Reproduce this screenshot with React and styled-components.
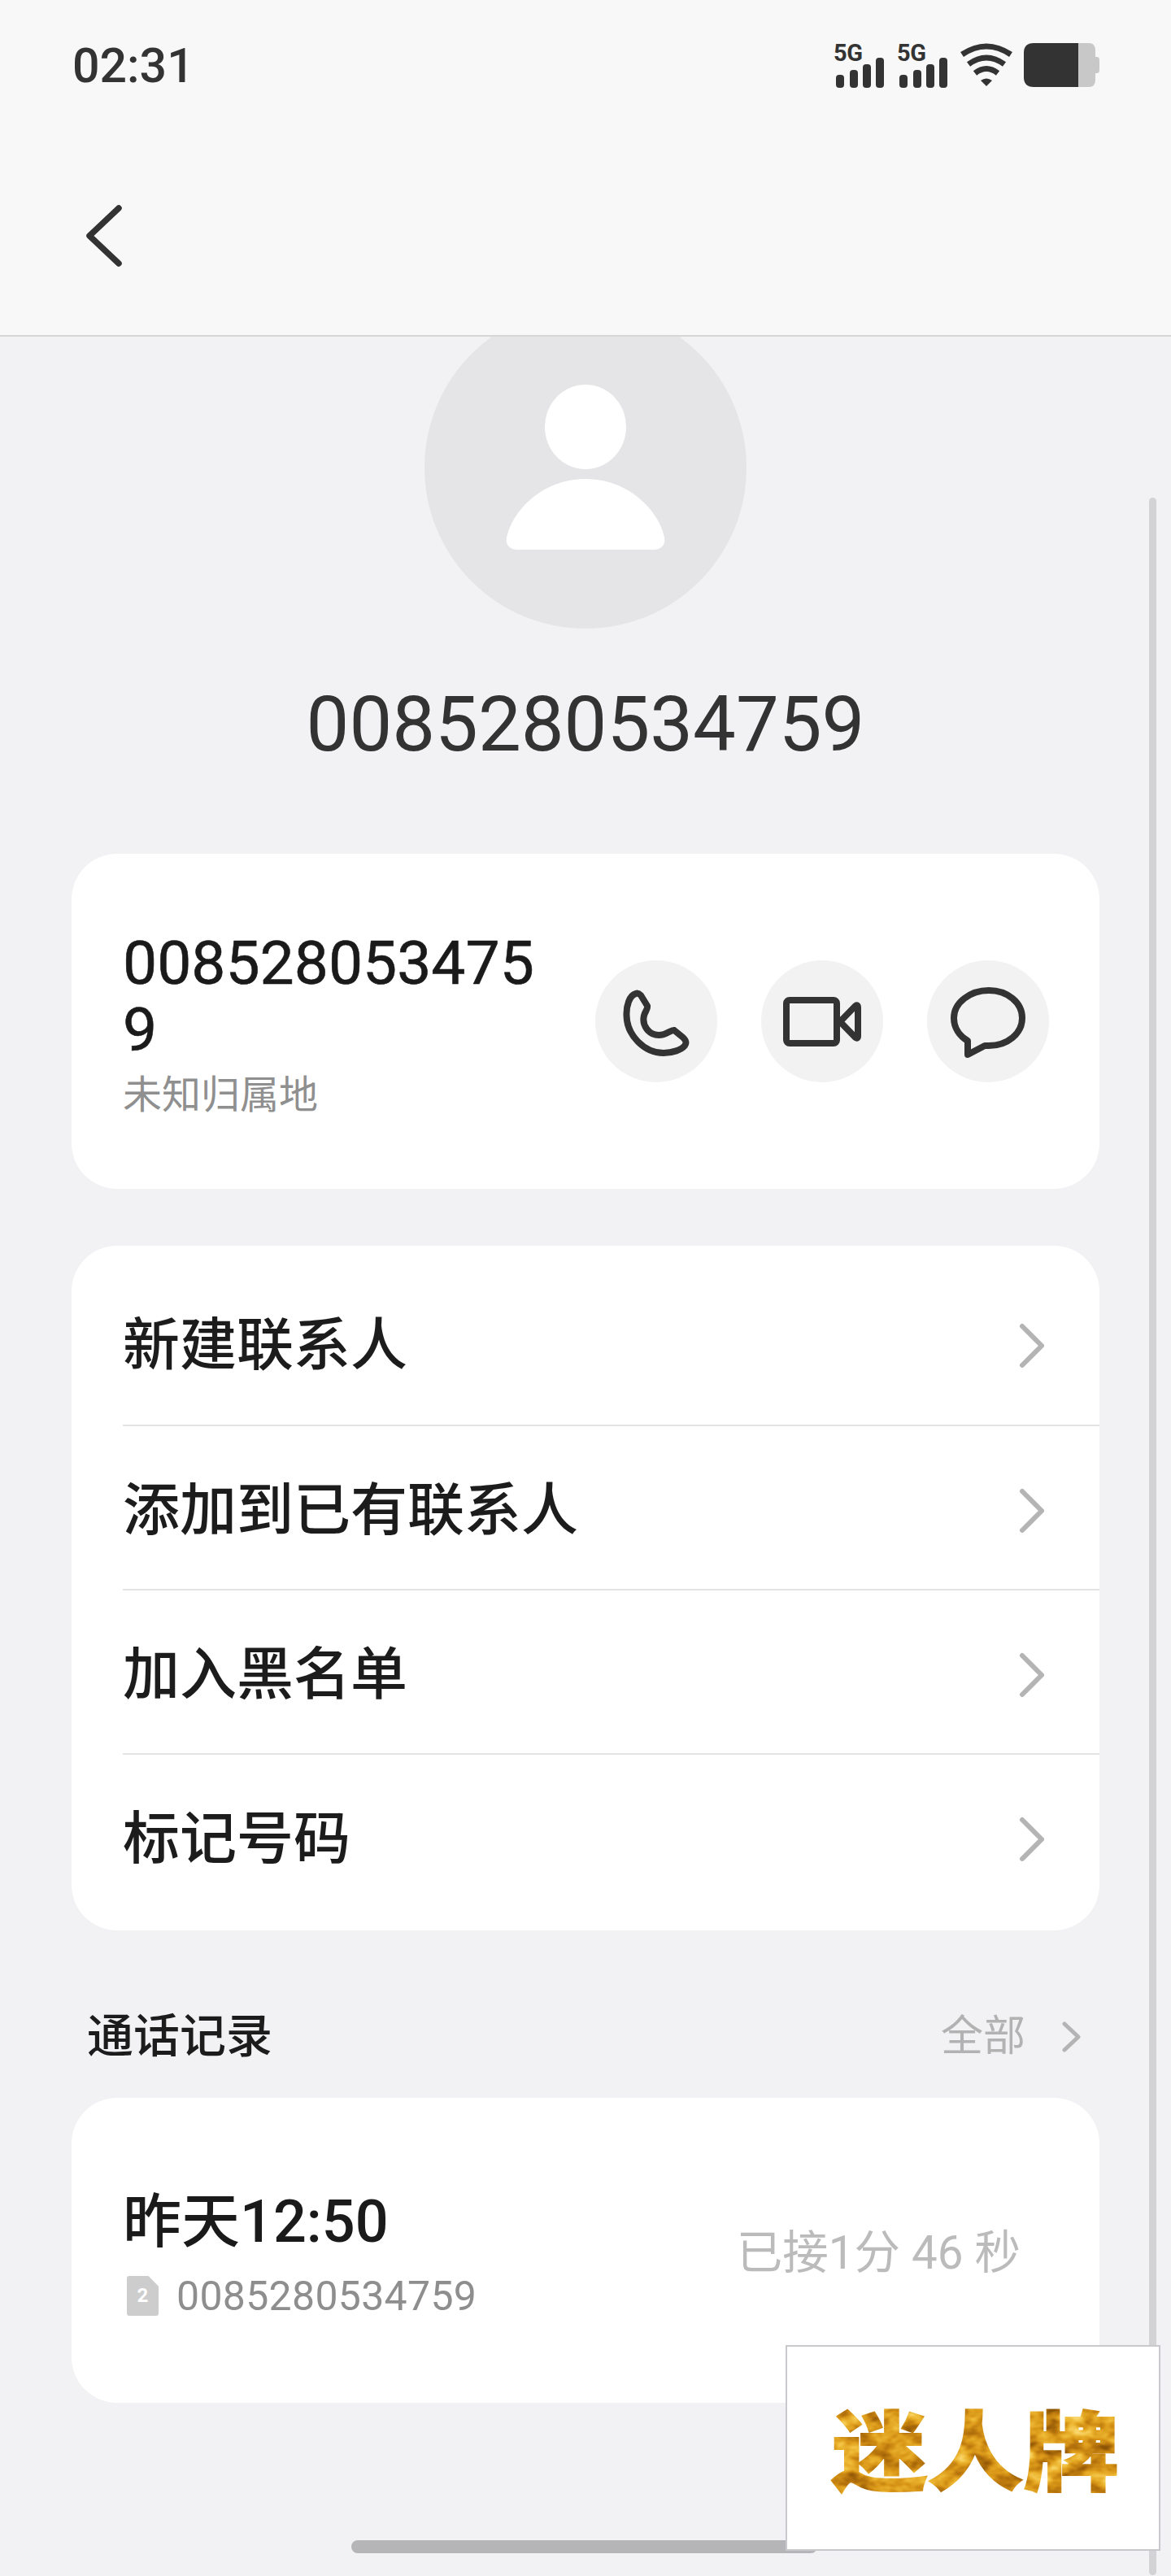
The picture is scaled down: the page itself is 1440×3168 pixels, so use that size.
import React from 'react';
import styled, { createGlobalStyle } from 'styled-components';

const GlobalStyle = createGlobalStyle`
  html, body {
    margin: 0;
    padding: 0;
    background: #f2f2f4;
  }
  * {
    box-sizing: border-box;
  }
`;

const Page = styled.div`
  position: relative;
  width: 1440px;
  height: 3168px;
  overflow: hidden;
  background: #f2f2f4;
  font-family: Roboto, "Noto Sans CJK SC", sans-serif;
`;

const Header = styled.header`
  height: 414px;
  background: #f8f8f8;
  border-bottom: 2px solid #d6d6d6;
`;

const StatusBar = styled.div`
  height: 112px;
  display: flex;
  justify-content: space-between;
  align-items: flex-start;
  padding: 47px 88px 0 89px;
`;

const Time = styled.div`
  font-size: 59px;
  line-height: 68px;
  font-weight: 500;
  color: #333;
`;

const StatusIcons = styled.div`
  display: flex;
  align-items: flex-start;
  margin-top: 6px;
`;

const SignalGroup = styled.div`
  width: 64px;
  margin-right: 14px;
`;

const SignalLabel = styled.div`
  height: 24px;
  font-size: 29px;
  line-height: 24px;
  font-weight: 700;
  letter-spacing: -0.5px;
  color: #333;
`;

const SignalBars = styled.svg`
  display: block;
  width: 64px;
  height: 37px;
  margin-top: -6px;
  fill: #333;
`;

const WifiIcon = styled.svg`
  width: 66px;
  height: 54px;
  margin-left: -1px;
  margin-right: 13px;
  display: block;
`;

const BatteryIcon = styled.svg`
  width: 93px;
  height: 54px;
  display: block;
`;

const BackButton = styled.div`
  margin: 137px 0 0 102px;
  width: 52px;
  height: 82px;
`;

const Main = styled.main`
  height: 2754px;
  overflow: hidden;
  padding: 0 88px;
`;

const Avatar = styled.div`
  width: 396px;
  height: 396px;
  margin: -37px auto 0;
  border-radius: 50%;
  background: #e5e5e7;
  display: flex;
  align-items: center;
  justify-content: center;
`;

const BigNumber = styled.h1`
  margin: 63px 0 0;
  font-size: 94px;
  line-height: 110px;
  font-weight: 400;
  color: #333;
  text-align: center;
`;

const Card = styled.section`
  background: #fff;
  border-radius: 56px;
`;

const ContactCard = styled(Card)`
  margin-top: 104px;
  height: 412px;
  padding: 0 62px 0 63px;
  display: flex;
  align-items: center;
`;

const ContactInfo = styled.div`
  width: 525px;
  margin-top: 8px;
`;

const ContactNumber = styled.div`
  font-size: 75px;
  line-height: 82px;
  font-weight: 400;
  color: #1a1a1a;
  word-break: break-all;
  -webkit-text-stroke: 0.6px #1a1a1a;
`;

const Location = styled.div`
  margin-top: 10px;
  font-size: 48px;
  line-height: 60px;
  color: #8f8f8f;
`;

const Actions = styled.div`
  margin-left: auto;
  display: flex;
  gap: 54px;
`;

const ActionButton = styled.div`
  width: 150px;
  height: 150px;
  border-radius: 50%;
  background: #f2f2f2;
`;

const ActionIcon = styled.svg`
  display: block;
  width: 150px;
  height: 150px;
  fill: none;
  stroke: #333;
  stroke-width: 8;
  stroke-linejoin: round;
`;

const MenuCard = styled(Card)`
  margin-top: 70px;
  padding: 18px 0 16px 63px;
`;

const MenuRow = styled.div`
  height: 202px;
  display: flex;
  align-items: center;
  justify-content: space-between;
  padding: 0 68px 5px 0;
  border-top: ${(props) => (props.$first ? 'none' : '2px solid #e3e3e3')};
  font-size: 70px;
  font-weight: 500;
  color: #1c1c1c;
`;

const Chevron = styled.svg`
  display: block;
  width: ${(props) => props.$w}px;
  height: ${(props) => props.$h}px;
  margin-top: ${(props) => props.$mt || 0}px;
  fill: none;
  stroke: #b4b4b4;
  stroke-width: ${(props) => props.$sw || 6};
  stroke-linecap: round;
  stroke-linejoin: round;
`;

const SectionHead = styled.div`
  display: flex;
  align-items: center;
  justify-content: space-between;
  padding: 96px 23px 40px 19px;
`;

const SectionTitle = styled.div`
  font-size: 57px;
  line-height: 70px;
  font-weight: 500;
  color: #1c1c1c;
`;

const SectionAll = styled.div`
  display: flex;
  align-items: center;
  gap: 44px;
  font-size: 52px;
  line-height: 70px;
  color: #b2b2b2;
`;

const RecordCard = styled(Card)`
  height: 375px;
  padding: 6px 97px 0 63px;
  display: flex;
  align-items: center;
  justify-content: space-between;
`;

const RecordTime = styled.div`
  font-size: 72px;
  line-height: 90px;
  font-weight: 500;
  color: #1a1a1a;
`;

const RecordSub = styled.div`
  display: flex;
  align-items: center;
  margin-top: 16px;
  padding-left: 5px;
  gap: 22px;
  font-size: 50px;
  line-height: 60px;
  letter-spacing: 0.3px;
  color: #8e8e8e;
`;

const SimBadge = styled.div`
  width: 39px;
  height: 49px;
  background: #cdcdcd;
  border-radius: 3px;
  clip-path: polygon(0 0, 68% 0, 100% 26%, 100% 100%, 0 100%);
  display: flex;
  align-items: center;
  justify-content: center;
  font-size: 24px;
  line-height: 49px;
  font-weight: 700;
  color: #fff;
`;

const Duration = styled.div`
  font-size: 56.5px;
  line-height: 70px;
  color: #bbb;
`;

const VerticalScroll = styled.div`
  position: absolute;
  left: 1413px;
  top: 612px;
  bottom: 1px;
  width: 9px;
  border-radius: 5px;
  background: #d3d3d6;
`;

const HorizontalScroll = styled.div`
  position: absolute;
  left: 432px;
  top: 3124px;
  width: 573px;
  height: 16px;
  border-radius: 8px;
  background: #b5b5b7;
`;

const Watermark = styled.div`
  position: absolute;
  left: 966px;
  top: 2884px;
  width: 461px;
  height: 253px;
  background: #fff;
  border: 2px solid #c9c9cd;
  display: flex;
  align-items: center;
  justify-content: center;
`;

const GoldText = styled.div`
  font-family: "Noto Sans CJK SC", sans-serif;
  font-size: 118px;
  line-height: 130px;
  font-weight: 900;
  margin: 0 0 6px 6px;
  color: #000;
  -webkit-text-stroke: 2px #000;
  transform: scaleY(0.9);
  filter: url(#gold);
`;

const FilterDefs = styled.svg`
  position: absolute;
  width: 0;
  height: 0;
`;

const menuItems = ['新建联系人', '添加到已有联系人', '加入黑名单', '标记号码'];

const Signal = () => (
  <SignalGroup>
    <SignalLabel>5G</SignalLabel>
    <SignalBars viewBox="0 0 64 37">
      <rect x="3" y="21" width="10" height="16" rx="4" />
      <rect x="20" y="15" width="10" height="22" rx="4" />
      <rect x="36" y="8" width="10" height="29" rx="4" />
      <rect x="52" y="0" width="10" height="37" rx="4" />
    </SignalBars>
  </SignalGroup>
);

const App = () => {
  return (
    <Page>
      <GlobalStyle />
      <FilterDefs>
        <filter id="gold" x="0" y="0" width="100%" height="100%" colorInterpolationFilters="sRGB">
          <feTurbulence type="fractalNoise" baseFrequency="0.035 0.05" numOctaves="3" seed="7" />
          <feColorMatrix values="1.6 0 0 0 -0.3  1.6 0 0 0 -0.3  1.6 0 0 0 -0.3  0 0 0 0 1" />
          <feComponentTransfer>
            <feFuncR type="table" tableValues="0.55 0.72 0.86 0.93 0.98" />
            <feFuncG type="table" tableValues="0.33 0.46 0.6 0.72 0.84" />
            <feFuncB type="table" tableValues="0.02 0.05 0.1 0.2 0.42" />
          </feComponentTransfer>
          <feComposite in2="SourceAlpha" operator="in" />
        </filter>
      </FilterDefs>
      <Header>
        <StatusBar>
          <Time>02:31</Time>
          <StatusIcons>
            <Signal />
            <Signal />
            <WifiIcon viewBox="0 0 66 54">
              <g fill="none" stroke="#333" strokeWidth="7">
                <path d="M3 14 Q33 -6 63 14" />
                <path d="M11 26 Q33 10 55 26" />
                <path d="M19 37 Q33 26 47 37" />
              </g>
              <path d="M26 46 Q33 41 40 46 L33 53 Z" fill="#333" />
            </WifiIcon>
            <BatteryIcon viewBox="0 0 93 54">
              <path d="M67 0 H80 Q88 0 88 9 V45 Q88 54 80 54 H67 Z" fill="#c8c8c8" />
              <path d="M88 17 H90 Q93 17 93 21 V33 Q93 37 90 37 H88 Z" fill="#c8c8c8" />
              <path d="M12 0 H67 V54 H12 Q0 54 0 42 V12 Q0 0 12 0 Z" fill="#333" />
            </BatteryIcon>
          </StatusIcons>
        </StatusBar>
        <BackButton>
          <svg width="52" height="82" viewBox="0 0 52 82" fill="none" stroke="#333" strokeWidth="7.5" strokeLinecap="round" strokeLinejoin="round">
            <path d="M44 7 L8 41 L44 75" />
          </svg>
        </BackButton>
      </Header>
      <Main>
        <Avatar>
          <svg width="196" height="204" viewBox="0 0 196 204" fill="#fff">
            <ellipse cx="98" cy="52" rx="50" ry="52" />
            <path d="M98 116 C45 116 8 155 1 188 C-1 198 6 203 14 203 H182 C190 203 197 198 195 188 C188 155 151 116 98 116 Z" />
          </svg>
        </Avatar>
        <BigNumber>0085280534759</BigNumber>

        <ContactCard>
          <ContactInfo>
            <ContactNumber>0085280534759</ContactNumber>
            <Location>未知归属地</Location>
          </ContactInfo>
          <Actions>
            <ActionButton>
              <ActionIcon viewBox="0 0 150 150">
                <path d="M50 41 C42 43 38 56 38.5 68 C39 92 60 114 84 114 C95 114 106 110 110 105 C113 101 111 98 108 95 L97 86 C93 85 88 92 78 92 C66 92 57 80 60 68 C61 63 65 60 64 56 L56 43 C54 41 52 40 50 41 Z" />
              </ActionIcon>
            </ActionButton>
            <ActionButton>
              <ActionIcon viewBox="0 0 150 150">
                <rect x="31" y="49" width="62" height="53" rx="4" />
                <path d="M97 75.5 L116 56 Q119 54 119 58 V93 Q119 97 116 95 Z" />
              </ActionIcon>
            </ActionButton>
            <ActionButton>
              <ActionIcon viewBox="0 0 150 150">
                <path d="M50 99 V116 L71 105 H76 C99 105 117 90 117 71 C117 52 99 37 76 37 C53 37 33 52 33 71 C33 83 40 93 50 99 Z" />
              </ActionIcon>
            </ActionButton>
          </Actions>
        </ContactCard>

        <MenuCard>
          {menuItems.map((item, index) => (
            <MenuRow key={item} $first={index === 0}>
              {item}
              <Chevron $w={34} $h={58} $mt={13} viewBox="0 0 34 58">
                <path d="M7 5 L31 29 L7 53" />
              </Chevron>
            </MenuRow>
          ))}
        </MenuCard>

        <SectionHead>
          <SectionTitle>通话记录</SectionTitle>
          <SectionAll>
            全部
            <Chevron $w={24} $h={38} $sw={5} viewBox="0 0 24 38">
              <path d="M4 3 L21 19 L4 35" />
            </Chevron>
          </SectionAll>
        </SectionHead>

        <RecordCard>
          <div>
            <RecordTime>昨天12:50</RecordTime>
            <RecordSub>
              <SimBadge>2</SimBadge>
              0085280534759
            </RecordSub>
          </div>
          <Duration>已接1分 46 秒</Duration>
        </RecordCard>
      </Main>

      <VerticalScroll />
      <HorizontalScroll />
      <Watermark>
        <GoldText>迷人牌</GoldText>
      </Watermark>
    </Page>
  );
};

export default App;
